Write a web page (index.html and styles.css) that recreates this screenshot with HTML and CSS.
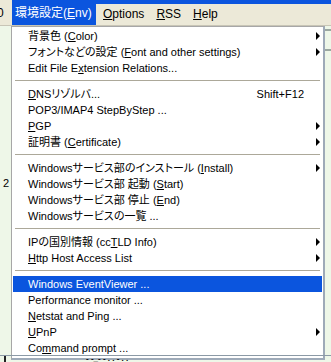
FILE: index.html
```html
<!DOCTYPE html>
<html lang="ja">
<head>
    <meta charset="UTF-8">
    <title>環境設定メニュー</title>
    <link rel="stylesheet" href="styles.css">
</head>
<body>

<div class="screen">
    <!-- Menu bar -->
    <div class="menubar">
        <span class="stub">0</span>
        <span class="top-item active">環境設定(<u>E</u>nv)</span>
        <div class="bar-rest">
            <div class="title-strip"></div>
            <div class="bar-items">
                <span class="top-item"><u>O</u>ptions</span>
                <span class="top-item"><u>R</u>SS</span>
                <span class="top-item"><u>H</u>elp</span>
            </div>
        </div>
    </div>

    <div class="page">
        <div class="gutter"><span class="row-num">2</span></div>

        <!-- Dropdown -->
        <div class="menu">
            <div class="item"><span>背景色 (<u>C</u>olor)</span><span></span><span class="arrow"></span></div>
            <div class="item"><span>フォントなどの設定 (<u>F</u>ont and other settings)</span><span></span><span class="arrow"></span></div>
            <div class="item"><span>Edit File E<u>x</u>tension Relations...</span><span></span><span></span></div>
            <div class="sep"></div>
            <div class="item"><span><u>D</u>NSリゾルバ...</span><span class="key">Shift+F12</span><span></span></div>
            <div class="item"><span>POP3/IMAP4 StepByStep ...</span><span></span><span></span></div>
            <div class="item"><span><u>P</u>GP</span><span></span><span class="arrow"></span></div>
            <div class="item"><span>証明書 (<u>C</u>ertificate)</span><span></span><span class="arrow"></span></div>
            <div class="sep"></div>
            <div class="item"><span>Windowsサービス部のインストール (<u>I</u>nstall)</span><span></span><span class="arrow"></span></div>
            <div class="item"><span>Windowsサービス部 起動 (<u>S</u>tart)</span><span></span><span></span></div>
            <div class="item"><span>Windowsサービス部 停止 (<u>E</u>nd)</span><span></span><span></span></div>
            <div class="item"><span>Windowsサービスの一覧 ...</span><span></span><span></span></div>
            <div class="sep"></div>
            <div class="item"><span>IPの国別情報 (cc<u>T</u>LD Info)</span><span></span><span class="arrow"></span></div>
            <div class="item"><span><u>H</u>ttp Host Access List</span><span></span><span class="arrow"></span></div>
            <div class="sep"></div>
            <div class="item selected"><span>Windows EventViewer ...</span><span></span><span></span></div>
            <div class="item"><span>Performance monitor ...</span><span></span><span></span></div>
            <div class="item"><span><u>N</u>etstat and Ping ...</span><span></span><span></span></div>
            <div class="item"><span><u>U</u>PnP</span><span></span><span class="arrow"></span></div>
            <div class="item"><span>Co<u>m</u>mand prompt ...</span><span></span><span></span></div>
        </div>

        <div class="edge">
            <div class="edge-line"></div>
            <div class="edge-line"></div>
        </div>
    </div>

    <div class="bottom">
        <div class="bottom-box"></div>
        <div class="bottom-text">- -_- - . . - . .</div>
    </div>
</div>

</body>
</html>
```

FILE: styles.css
```css
body {
    margin: 0;
    font-family: 'Liberation Sans', 'Noto Sans CJK JP', sans-serif;
    font-size: 11px;
    font-feature-settings: "palt";
    color: #000;
    background: #eef7e8;
}
u {
    text-decoration: underline;
    text-underline-offset: 1px;
}
.screen {
    width: 331px;
    height: 362px;
    overflow: hidden;
    display: flex;
    flex-direction: column;
}

/* menu bar */
.menubar {
    display: flex;
    height: 26px;
    background: #ece9d8;
    border-bottom: 1px solid #c8c5b6;
    box-sizing: border-box;
}
.stub {
    width: 15px;
    line-height: 26px;
    font-size: 12px;
    margin-left: -3px;
}
.top-item {
    white-space: nowrap;
    font-size: 12px;
}
.top-item.active {
    background: #0b55de;
    color: #fff;
    padding: 0 3px 0 3px;
    width: 84px;
    box-sizing: border-box;
    height: 25px;
    line-height: 26px;
}
.bar-rest {
    flex: 1;
    display: flex;
    flex-direction: column;
}
.title-strip {
    height: 4px;
    background: #0b55de;
}
.bar-items {
    display: flex;
    gap: 12px;
    padding-left: 7px;
    line-height: 20px;
}
.bar-items .top-item {
    line-height: 20px;
}

/* page behind the menu */
.page {
    display: flex;
    flex: 1;
    min-height: 0;
}
.gutter {
    width: 11px;
    flex-shrink: 0;
}
.row-num {
    display: block;
    margin-top: 151px;
    padding-left: 3px;
}
.edge {
    flex: 1;
    padding-top: 3px;
    display: flex;
    flex-direction: column;
    gap: 18px;
}
.edge-line {
    height: 2px;
    background: #9aa7a0;
}

/* dropdown */
.menu {
    width: 309px;
    flex-shrink: 0;
    background: #fff;
    border: 1px solid #a7a7a7;
    border-right: 2px solid #9eaab8;
    border-bottom: 2px solid #9eaab8;
    padding: 1px 1px 2px 1px;
    align-self: flex-start;
}
.item {
    display: grid;
    grid-template-columns: 1fr auto 18px;
    height: 16px;
    line-height: 16px;
    padding-left: 15px;
    white-space: nowrap;
}
.item.selected {
    background: #0b55de;
    color: #fff;
}
.key {
    padding-right: 0;
}
.arrow {
    position: relative;
}
.arrow::after {
    content: '';
    position: absolute;
    left: 12px;
    top: 4px;
    border-left: 4px solid #000;
    border-top: 4px solid transparent;
    border-bottom: 4px solid transparent;
}
.sep {
    height: 1px;
    background: #aca899;
    margin: 4px 2px 5px 2px;
}

/* strip below */
.bottom {
    height: 6px;
    display: flex;
    align-items: flex-start;
    gap: 8px;
    border-top: 1px solid #8c9aa6;
}
.bottom-box {
    width: 12px;
    height: 6px;
    border-left: 2px solid #222;
    margin-left: 4px;
}
.bottom-text {
    font-size: 8px;
    line-height: 6px;
    margin-left: 60px;
    font-weight: bold;
}
```
